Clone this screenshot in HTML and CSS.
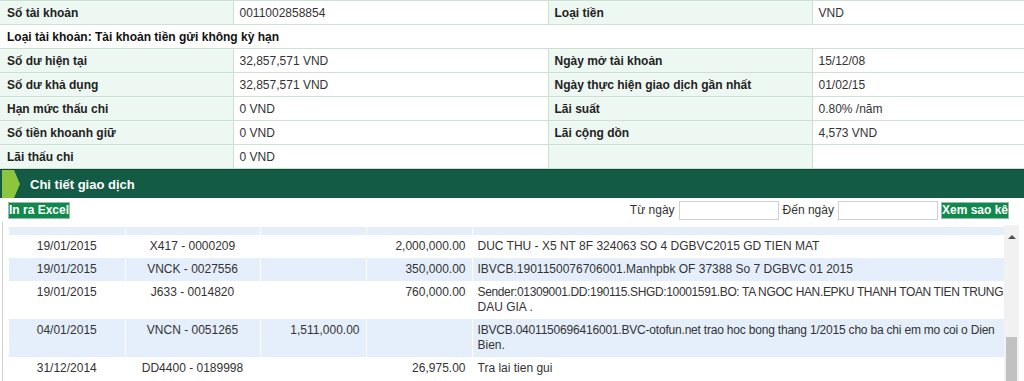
FILE: index.html
```html
<!DOCTYPE html>
<html lang="vi">
<head>
    <meta charset="UTF-8">
    <title>Chi tiết tài khoản</title>
    <link rel="stylesheet" href="styles.css">
</head>
<body>
<!-- thông tin tài khoản -->
<table class="info">
    <colgroup>
        <col class="c1"><col class="c2"><col class="c3"><col class="c4">
    </colgroup>
    <tr>
        <td class="lbl">Số tài khoản</td><td>0011002858854</td>
        <td class="lbl">Loại tiền</td><td>VND</td>
    </tr>
    <tr>
        <td class="type" colspan="4">Loại tài khoản: Tài khoản tiền gửi không kỳ hạn</td>
    </tr>
    <tr>
        <td class="lbl">Số dư hiện tại</td><td>32,857,571 VND</td>
        <td class="lbl">Ngày mở tài khoản</td><td>15/12/08</td>
    </tr>
    <tr>
        <td class="lbl">Số dư khả dụng</td><td>32,857,571 VND</td>
        <td class="lbl">Ngày thực hiện giao dịch gần nhất</td><td>01/02/15</td>
    </tr>
    <tr>
        <td class="lbl">Hạn mức thấu chi</td><td>0 VND</td>
        <td class="lbl">Lãi suất</td><td>0.80% /năm</td>
    </tr>
    <tr>
        <td class="lbl">Số tiền khoanh giữ</td><td>0 VND</td>
        <td class="lbl">Lãi cộng dồn</td><td>4,573 VND</td>
    </tr>
    <tr>
        <td class="lbl">Lãi thấu chi</td><td>0 VND</td>
        <td class="lbl"></td><td></td>
    </tr>
</table>

<div class="section-bar">
    <svg class="chevron" width="22" height="28" viewBox="0 0 22 28">
        <polygon points="2,0 14,0 20,14 14,28 2,28" fill="#8cc63f"/>
    </svg>
    <span>Chi tiết giao dịch</span>
</div>

<div class="toolbar">
    <button class="btn">In ra Excel</button>
    <div class="filter">
        <label>Từ ngày</label><input type="text">
        <label>Đến ngày</label><input type="text">
        <button class="btn">Xem sao kê</button>
    </div>
</div>

<!-- bảng giao dịch -->
<div class="grid-wrap">
    <div class="grid-view">
        <table class="grid">
            <colgroup>
                <col class="g1"><col class="g2"><col class="g3"><col class="g4"><col class="g5">
            </colgroup>
            <tr class="head"><td></td><td></td><td></td><td></td><td></td></tr>
            <tr>
                <td class="ct">19/01/2015</td><td class="ct">X417 - 0000209</td><td></td>
                <td class="rt">2,000,000.00</td><td class="desc">DUC THU - X5 NT 8F 324063 SO 4 DGBVC2015 GD TIEN MAT</td>
            </tr>
            <tr class="alt">
                <td class="ct">19/01/2015</td><td class="ct">VNCK - 0027556</td><td></td>
                <td class="rt">350,000.00</td><td class="desc">IBVCB.1901150076706001.Manhpbk OF 37388 So 7 DGBVC 01 2015</td>
            </tr>
            <tr>
                <td class="ct">19/01/2015</td><td class="ct">J633 - 0014820</td><td></td>
                <td class="rt">760,000.00</td><td class="desc"><span class="tight">Sender:01309001.DD:190115.SHGD:10001591.BO: TA NGOC HAN.EPKU THANH TOAN TIEN TRUNG</span><br>DAU GIA .</td>
            </tr>
            <tr class="alt">
                <td class="ct">04/01/2015</td><td class="ct">VNCN - 0051265</td><td class="rt">1,511,000.00</td>
                <td></td><td class="desc"><span class="snug">IBVCB.0401150696416001.BVC-otofun.net trao hoc bong thang 1/2015 cho ba chi em mo coi o Dien</span><br>Bien.</td>
            </tr>
            <tr>
                <td class="ct">31/12/2014</td><td class="ct">DD4400 - 0189998</td><td></td>
                <td class="rt">26,975.00</td><td class="desc">Tra lai tien gui</td>
            </tr>
        </table>
    </div>
    <div class="scrollbar">
        <div class="arrow"></div>
        <div class="thumb"></div>
    </div>
</div>
</body>
</html>
```

FILE: styles.css
```css
:root {
    --mint: #eef8f2;
    --line: #cbe2d3;
    --dark-green: #135b45;
    --btn-green: #0f8a4c;
    --stripe: #e4effb;
    --text: #333333;
}

body {
    margin: 0;
    font-family: 'Liberation Sans', Arial, sans-serif;
    font-size: 12px;
    color: var(--text);
    background: #fff;
    height: 381px;
    overflow: hidden;
}

/* bảng thông tin */
.info {
    width: 1024px;
    border-collapse: collapse;
    table-layout: fixed;
    border-top: 1px solid var(--line);
}

.info .c1 { width: 233px; }
.info .c2 { width: 315px; }
.info .c3 { width: 264px; }
.info .c4 { width: 212px; }

.info td {
    height: 23px;
    padding: 0 6px;
    border: 1px solid var(--line);
    white-space: nowrap;
}

.info tr td:first-child {
    border-left: none;
    padding-left: 7px;
}

.info tr td:last-child {
    border-right: none;
}

.info .lbl {
    background: var(--mint);
    font-weight: bold;
    color: #222;
}

.info .type {
    font-weight: bold;
    color: #111;
    background: #fff;
}

/* thanh tiêu đề */
.section-bar {
    height: 28px;
    background: var(--dark-green);
    display: flex;
    align-items: center;
    border-top: 1px solid #0d4a37;
}

.chevron {
    flex: none;
}

.section-bar span {
    color: #fff;
    font-weight: bold;
    font-size: 13px;
    margin-left: 8px;
}

/* thanh công cụ */
.toolbar {
    height: 24px;
    display: flex;
    justify-content: space-between;
    align-items: center;
    padding: 0 15px 0 8px;
}

.btn {
    background: var(--btn-green);
    color: #fff;
    font-family: inherit;
    font-weight: bold;
    font-size: 12px;
    border: 1px solid #9bb8a9;
    padding: 0;
    height: 17px;
    line-height: 15px;
    cursor: pointer;
}

.filter {
    display: flex;
    align-items: center;
}

.filter label {
    margin-right: 4px;
    margin-left: 4px;
}

.filter input {
    width: 96px;
    height: 15px;
    border: 1px solid #d0d0d0;
    padding: 1px;
}

.filter .btn {
    margin-left: 3px;
}

/* bảng giao dịch */
.grid-wrap {
    display: flex;
    margin-left: 2px;
    border-left: 1px solid #cfcfcf;
    padding-left: 6px;
    padding-top: 5px;
    height: 154px;
}

.grid-view {
    width: 995px;
    overflow: hidden;
}

.grid {
    width: 995px;
    border-collapse: collapse;
    table-layout: fixed;
}

.grid .g1 { width: 116px; }
.grid .g2 { width: 135px; }
.grid .g3 { width: 106px; }
.grid .g4 { width: 106px; }
.grid .g5 { width: 532px; }

.grid td {
    padding: 4px 6px;
    line-height: 15px;
    vertical-align: top;
    border-right: 1px solid #fff;
}

.grid td.desc {
    padding: 4px 0 4px 5px;
    border-right: none;
    white-space: nowrap;
    overflow: hidden;
}

/* dòng dài: ép chữ cho vừa cột */
.desc .tight { letter-spacing: -0.36px; }
.desc .snug { letter-spacing: -0.2px; }

.grid tr.head td {
    background: var(--stripe);
    padding: 0;
    line-height: 8px;
    height: 8px;
}

.grid tr.alt td {
    background: var(--stripe);
}

.grid .ct { text-align: center; }
.grid .rt { text-align: right; }

.scrollbar {
    width: 15px;
    background: #f1f1f1;
    display: flex;
    flex-direction: column;
    align-items: center;
    margin-top: -2px;
}

.arrow {
    margin-top: 10px;
    width: 0;
    height: 0;
    border-left: 4px solid transparent;
    border-right: 4px solid transparent;
    border-bottom: 4px solid #505050;
}

.thumb {
    margin-top: 98px;
    width: 11px;
    flex: 1;
    background: #c1c1c1;
}
```
